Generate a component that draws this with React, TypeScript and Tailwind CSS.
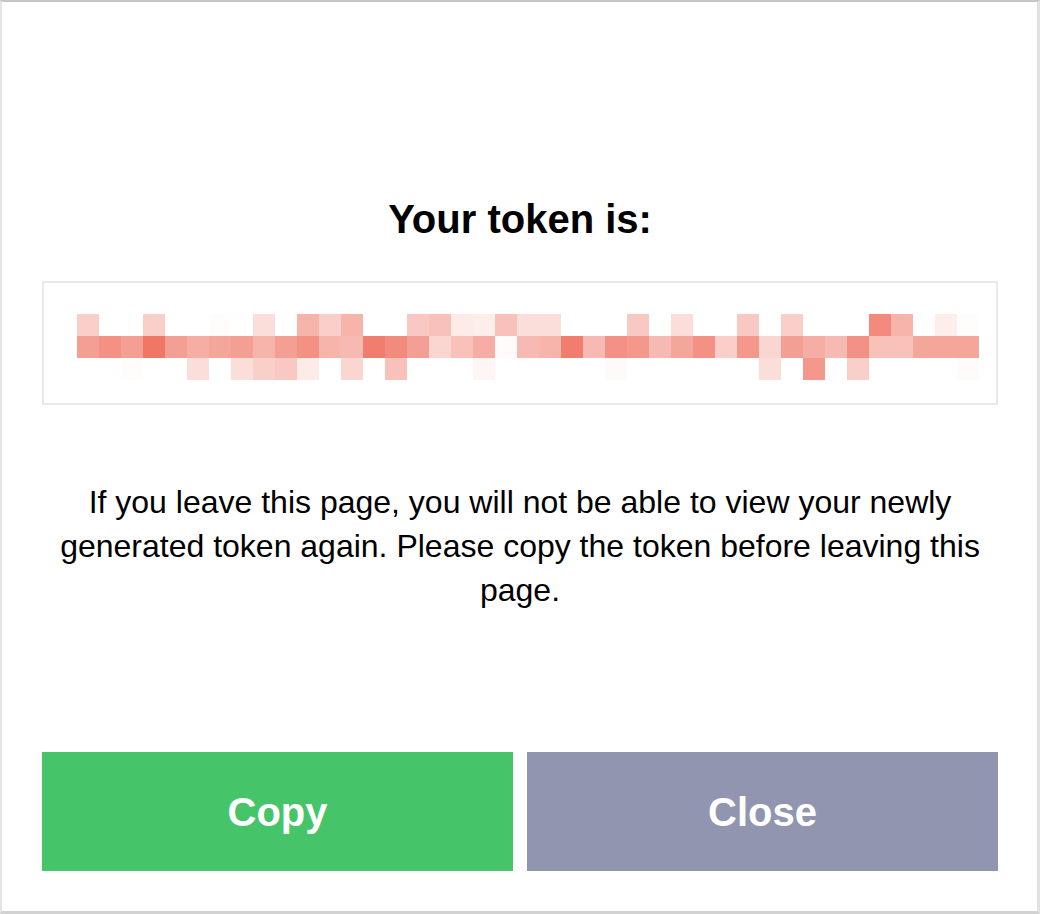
import React from "react";

const ROWS: number[][] = [
  [0.35,0,0,0.35,0,0,0.02,0, 0.25,0,0.55,0.35,0.55,0,0,0.4, 0.45,0.15,0.12,0.45,0.25,0.25,0,0, 0,0.4,0,0.25,0,0,0.4,0, 0.35,0,0,0,0.85,0.55,0,0.12,0.02],
  [0.7,0.8,0.7,1,0.7,0.6,0.65,0.7, 0.55,0.7,0.8,0.55,0.5,0.95,0.85,0.7, 0.3,0.45,0.6,0.03,0.5,0.55,0.95,0.5, 0.8,0.75,0.5,0.65,0.8,0.35,0.75,0.3, 0.7,0.6,0.5,0.8,0.45,0.45,0.65,0.65,0.65],
  [0,0,0.02,0,0,0.25,0,0.25, 0.35,0.4,0.15,0,0.3,0,0.45,0, 0,0,0.07,0,0,0,0,0, 0.04,0,0,0,0,0,0,0.25, 0,0.75,0,0.35,0,0,0,0,0.03],
];

function PixelToken() {
  return (
    <div className="flex flex-col">
      {ROWS.map((row, r) => (
        <div key={r} className="flex">
          {row.map((a, c) => (
            <div
              key={c}
              className="w-[22px] h-[22px]"
              style={{ backgroundColor: `rgba(240,118,102,${a})` }}
            />
          ))}
        </div>
      ))}
    </div>
  );
}

export default function App() {
  return (
    <div
      className="w-[1040px] h-[914px] box-border bg-white border-t-2 border-l-2 border-r-[3px] border-b-[3px] border-t-[#c6c6c6] border-l-[#e4e4e4] border-r-[#e2e2e2] border-b-[#d2d2d2] flex flex-col pl-[40px] pr-[39px]"
      style={{ fontFamily: '"Liberation Sans", Arial, sans-serif' }}
    >
      <h1 className="mt-[193px] text-center text-[40px] leading-[48px] font-bold text-black">
        Your token is:
      </h1>
      <div className="mt-[38px] h-[124px] box-border border-2 border-[#e8e8e8] pl-[33px] pt-[31px]">
        <PixelToken />
      </div>
      <p className="mt-[75px] text-center text-[32px] leading-[44px] text-black">
        If you leave this page, you will not be able to view your newly generated token again. Please copy the token before leaving this page.
      </p>
      <div className="mt-[140px] flex gap-[14px]">
        <button className="flex-1 h-[119px] bg-[#46c46a] text-white font-bold text-[40px]">
          Copy
        </button>
        <button className="flex-1 h-[119px] bg-[#9195b0] text-white font-bold text-[40px]">
          Close
        </button>
      </div>
    </div>
  );
}
